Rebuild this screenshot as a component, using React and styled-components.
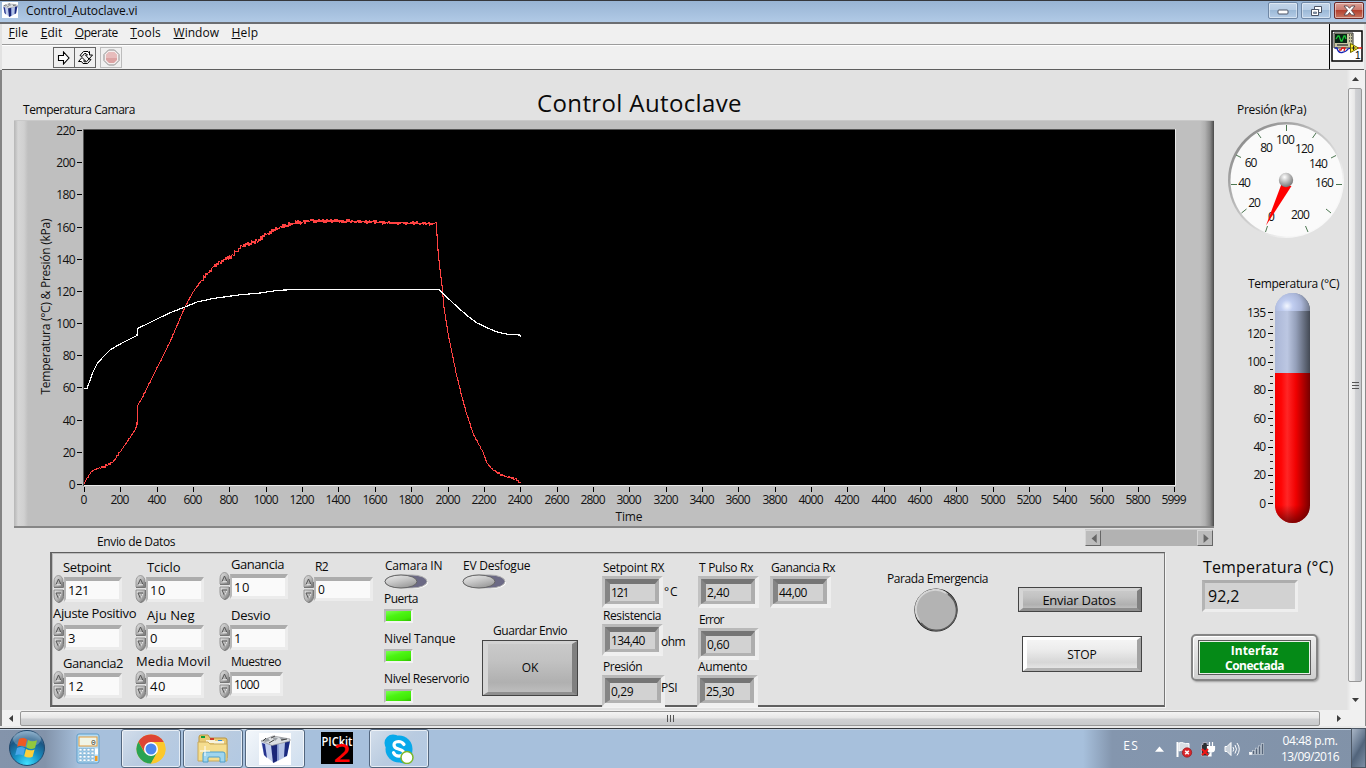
import React, { useLayoutEffect, useRef } from "react";
import styled, { createGlobalStyle, css } from "styled-components";

const FONT = '"Open Sans", "Noto Sans", sans-serif';

const GlobalStyle = createGlobalStyle`
  * { box-sizing: border-box; }
  html, body { margin: 0; padding: 0; overflow: hidden; }
  body { font-family: ${FONT}; font-size: 12px; color: #000; }
  svg { display: block; flex: none; }
`;

/* ---------- text ---------- */

const TextSpan = styled.span`
  display: block;
  flex: none;
  width: max-content;
  white-space: nowrap;
  font-size: ${(p) => p.$size || 12}px;
  line-height: ${(p) => p.$lh || 16}px;
  font-weight: ${(p) => p.$weight || 400};
  color: ${(p) => p.$color || "#0a0a0a"};
  margin: ${(p) => p.$m || "0"};
  &::first-letter { text-decoration: ${(p) => (p.$mnemonic ? "underline" : "none")}; }
`;

/* Tracks its letters so that the line has the given width. */
function Text({ w, children, ...rest }) {
  const ref = useRef(null);
  useLayoutEffect(() => {
    const el = ref.current;
    if (!w || !el) return;
    el.style.letterSpacing = "0px";
    const natural = el.getBoundingClientRect().width;
    const n = Math.max(1, String(children).length - 1);
    el.style.letterSpacing = `${(w + 1.5 - natural) / n}px`;
  }, [w, children]);
  return (
    <TextSpan ref={ref} {...rest}>
      {children}
    </TextSpan>
  );
}

/* ---------- window chrome ---------- */

const Screen = styled.div`
  width: 1366px;
  height: 768px;
  display: flex;
  flex-direction: column;
  background: #e2e2e2;
  overflow: hidden;
`;

const TitleBar = styled.header`
  height: 24px;
  flex: none;
  display: flex;
  align-items: flex-start;
  padding: 1px 0 0 2px;
  border-top: 1px solid #35373c;
  border-bottom: 2px solid #6c6e72;
  background: linear-gradient(#98b4d4, #b1cae6);
`;

const WindowButtons = styled.div`
  display: flex;
  gap: 3px;
  margin: 0 2px 0 auto;
`;

const WindowButton = styled.div`
  width: 30px;
  height: 17px;
  display: flex;
  align-items: center;
  justify-content: center;
  border: 1px solid ${(p) => (p.$close ? "#6d2a29" : "#6f87a5")};
  border-radius: 2px;
  box-shadow: inset 0 0 0 1px rgba(255, 255, 255, 0.45);
  background: ${(p) =>
    p.$close
      ? "linear-gradient(#dba197, #c9776c 48%, #b4412f 50%, #c87660)"
      : "linear-gradient(#c3d5e9, #b6cce4 48%, #9cb9d7 50%, #b5cde7)"};
`;

const Bars = styled.div`
  height: 46px;
  flex: none;
  display: flex;
  margin: 0 2px;
  background: #f0f0f0;
  border-bottom: 1px solid #5e5e5e;
`;

const BarStack = styled.div`
  flex: 1;
`;

const MenuBar = styled.nav`
  height: 21px;
  display: flex;
  gap: 12.5px;
  padding: 1px 0 0 6.5px;
  border-bottom: 1px solid #9c9c9c;
`;

const ToolBar = styled.div`
  height: 24px;
  display: flex;
  align-items: flex-start;
  padding: 1px 0 0 51px;
  border-top: 1px solid #fff;
`;

const ToolButton = styled.div`
  width: 22px;
  height: 21px;
  display: flex;
  align-items: center;
  justify-content: center;
  border: 1px solid ${(p) => (p.$off ? "#bcbcbc" : "#666")};
  margin-left: ${(p) => p.$ml || 0}px;
`;

const ViIconCell = styled.div`
  width: 35px;
  padding: 6px 0 0 1px;
  border-left: 1px solid #000;
`;

/* ---------- front panel ---------- */

const Body = styled.div`
  height: 640px;
  flex: none;
  display: flex;
  border-left: 2px solid #848484;
  border-right: 1px solid #8a8a8a;
`;

const FrontPanel = styled.main`
  width: 1345px;
  flex: none;
  display: flex;
  background: #e2e2e2;
`;

const LeftSide = styled.section`
  width: 1212px;
  flex: none;
`;

const RightSide = styled.aside`
  flex: 1;
`;

const Heading = styled.div`
  height: 50px;
  display: flex;
  align-items: flex-start;
`;

const GraphFrame = styled.div`
  width: 1200px;
  height: 408px;
  margin-left: 12px;
  padding: 2px 0 0 14px;
  border-top: 1px solid #c9c9c9;
  border-bottom: 2px solid #868686;
  background: linear-gradient(
    90deg,
    #b7b7b7 0, #c4c4c4 2px, #d6d6d6 4px, #d0d0d0 10px, #bfbfbf 14px,
    #bfbfbf 1186px, #b0b0b0 1191px, #8a8a8a 1196px, #5c5c5c 1199px, #484848 1200px
  );
`;

const UnderGraph = styled.div`
  height: 24px;
  display: flex;
  justify-content: space-between;
  padding: 0 1px 0 95px;
`;

const GraphScroll = styled.div`
  width: 128px;
  height: 17px;
  margin-top: 1px;
  display: flex;
  justify-content: space-between;
  background: #b2b2b2;
  border-top: 1px solid #c9c9c9;
`;

const GraphArrow = styled.div`
  width: 16px;
  height: 16px;
  display: flex;
  align-items: center;
  justify-content: center;
  background: #bcbcbc;
  border: 1px solid;
  border-color: #d5d5d5 #666 #666 #d5d5d5;
`;

const DataPanel = styled.section`
  width: 1115px;
  height: 155px;
  margin-left: 48px;
  display: flex;
  border: 2px solid;
  border-color: #5f5f5f #777 #5f5f5f #666;
  border-width: 1px 1px 2px 2px;
  padding-top: 1px;
  box-shadow: inset 1px 1px 0 #bdbdbd, 1px 1px 0 #f3f3f3;
`;

const Column = styled.div`
  width: ${(p) => p.$w}px;
  flex: none;
  padding-top: ${(p) => p.$pt || 0}px;
  margin-left: ${(p) => p.$ml || 0}px;
`;

const Row = styled.div`
  display: flex;
  margin: ${(p) => p.$m || "0"};
`;

const NumericBox = styled.div`
  width: ${(p) => p.$w}px;
  height: ${(p) => p.$h}px;
  margin: 2px 0 0 -1px;
  padding: 0 0 0 2px;
  display: flex;
  align-items: center;
  background: #fafafa;
  border: 3px solid;
  border-width: 4px 3px 3px 2px;
  border-color: #acacac #ececec #ececec #b8b8b8;
`;

const Readout = styled.div`
  width: ${(p) => p.$w}px;
  height: 32px;
  flex: none;
  border: 4px solid;
  border-width: 3px 4px 4px 3px;
  border-color: #b9b9b9 #eeeeee #f0f0f0 #c2c2c2;
`;

const ReadoutInner = styled.div`
  height: 100%;
  display: flex;
  align-items: center;
  padding-left: 1px;
  background: #d2d2d2;
  border: 4px solid;
  border-width: 5px 4px 3px 5px;
  border-color: #757575 #adadad #b2b2b2 #858585;
`;

const Led = styled.div`
  width: 29px;
  height: 14px;
  border: 2px solid;
  border-color: #b5b5b5 #f2f2f2 #f2f2f2 #b8b8b8;
  background: linear-gradient(165deg, #7dff55 0, #4cf413 40%, #41e806 75%, #2fc000 100%);
  margin-top: 2px;
`;

const buttonTone = {
  gray: css`
    background: linear-gradient(#c9c9c9, #c2c2c2 35%, #b0b0b0 80%, #bdbdbd);
    border-color: #d2d2d2 #808080 #8f8f8f #d6d6d6;
  `,
  white: css`
    background: linear-gradient(#f4f4f4, #ececec 35%, #d6d6d6 80%, #e4e4e4);
    border-color: #fff #a3a3a3 #b3b3b3 #fff;
  `,
};

const PushButton = styled.div`
  width: ${(p) => p.$w}px;
  height: ${(p) => p.$h}px;
  margin: ${(p) => p.$m || "0"};
  outline: 1px solid #444;
  outline-offset: -1px;
  padding: 1px;
  > div {
    height: 100%;
    display: flex;
    align-items: center;
    justify-content: center;
    border: ${(p) => p.$bevel || 4}px solid;
    border-top-width: 3px;
    border-bottom-width: 3px;
    ${(p) => buttonTone[p.$tone]}
  }
`;

const BigReadout = styled.div`
  width: 96px;
  height: 32px;
  margin: 3px 0 0 -12px;
  display: flex;
  align-items: center;
  padding-left: 3px;
  background: #d2d2d2;
  border: 3px solid;
  border-color: #adadad #eeeeee #eeeeee #b4b4b4;
`;

const StatusFrame = styled.div`
  width: 127px;
  height: 47px;
  margin: 22px 0 0 -23px;
  padding: 4px 5px;
  border: 2px solid #858585;
  border-radius: 5px;
  background: linear-gradient(#ededed, #d0d0d0);
  box-shadow: inset 1px 1px 0 #fff, 1px 1px 2px rgba(0, 0, 0, 0.3);
`;

const StatusLamp = styled.div`
  height: 35px;
  border: 1px solid #5d5d5d;
  box-shadow: inset 0 0 0 1px #e8f0e8;
  padding-top: 2px;
  display: flex;
  flex-direction: column;
  align-items: center;
  background: #058a17;
`;

/* ---------- window scroll bars ---------- */

const VScroll = styled.div`
  flex: 1;
  display: flex;
  flex-direction: column;
  align-items: center;
  padding-right: 2px;
  background: linear-gradient(90deg, #e3e3e3, #f1f1f1 4px);
`;

const VThumb = styled.div`
  width: 14px;
  height: 594px;
  margin: 6px 0 14px 0;
  display: flex;
  align-items: center;
  justify-content: center;
  border: 1px solid #979797;
  border-radius: 2px;
  background: linear-gradient(90deg, #f4f4f4, #e8e8e8 45%, #cfd0d3 55%, #c6c8cc);
`;

const HScroll = styled.div`
  height: 16px;
  flex: none;
  display: flex;
  align-items: center;
  border-left: 2px solid #848484;
  border-right: 1px solid #8a8a8a;
  background: #f0f0f0;
  padding-left: 5px;
`;

const HThumb = styled.div`
  width: 1300px;
  height: 15px;
  margin: 0 15px 0 6px;
  display: flex;
  align-items: center;
  justify-content: center;
  border: 1px solid #979797;
  border-radius: 2px;
  background: linear-gradient(#f4f4f4, #e6e6e6 45%, #d0d1d3 55%, #c8cacc);
`;

/* ---------- taskbar ---------- */

const Taskbar = styled.footer`
  height: 42px;
  flex: none;
  display: flex;
  align-items: flex-start;
  border-top: 2px solid #e9e9e9;
  box-shadow: inset 0 1px 0 #34393f, inset 0 2px 0 #c0d0e2;
  background: linear-gradient(
    90deg,
    #8494ab 0, #8293aa 45px, #a7c0dc 80px, #a7c0dc 1083px, #8496ae 1112px, #8192a8 100%
  );
`;

const TaskSlot = styled.div`
  width: ${(p) => p.$w}px;
  height: 40px;
  padding-top: ${(p) => p.$pt || 0}px;
  display: flex;
  justify-content: center;
`;

const TaskButton = styled.div`
  width: 60px;
  height: 39px;
  margin: 1px ${(p) => p.$mr ?? 2}px 0 0;
  display: flex;
  align-items: center;
  justify-content: center;
  border: 1px solid #53677f;
  border-radius: 3px;
  box-shadow: inset 0 0 0 1px rgba(255, 255, 255, 0.65);
  background: ${(p) =>
    p.$active
      ? "linear-gradient(135deg, #f3f7fb, #dce6f1 60%, #cfdff0)"
      : "linear-gradient(135deg, #d3deeb, #b9cbe0 50%, #b2c9e3)"};
`;

const Tray = styled.div`
  margin-left: auto;
  height: 40px;
  display: flex;
  align-items: flex-start;
`;

const TrayIcons = styled.div`
  display: flex;
  gap: 7px;
  margin: 13px 16px 0 12px;
`;

const Clock = styled.div`
  width: 58px;
  display: flex;
  flex-direction: column;
  align-items: center;
  padding-top: 5px;
  margin-right: 12px;
`;

const ShowDesktop = styled.div`
  width: 15px;
  height: 40px;
  border: 1px solid #4d5866;
  background: linear-gradient(120deg, #a9b6c6, #66788f 45%, #52647b 55%, #7d8fa5);
`;

/* ---------- icons ---------- */

const BoxIcon = ({ size }) => (
  <svg width={size} height={size} viewBox="0 0 32 32">
    <rect width="32" height="32" fill="#fff" />
    <path d="M2 9 13 12 15 30 5 22z" fill="#c3cfee" />
    <path d="M13 12 31 8 28 23 15 30z" fill="#b4c3e6" />
    <path d="M3 10 6 11 8 25 5 22z" fill="#26348f" />
    <path d="M12 12 18 11 18 28 14 30z" fill="#1b2678" />
    <path d="M26 9 31 8 28 23 25 24z" fill="#1b2a80" />
    <path d="M18 11 19.500 10.700 20 27 18 28z" fill="#7f92cc" />
    <path d="M2 8 14 3 31 6 31 8 13 12.500z" fill="#dcdfe2" stroke="#8a8d92" strokeWidth=".7" />
    <path d="M4 7 9 5 11 8 6 9zM13 4 19 5 16 8zM20 4 28 6 23 8z" fill="#9a9fa4" />
    <path d="M12 5l4-2M7 5 4 8M22 7l6-1M10 10l5-3" stroke="#444" strokeWidth="1" />
  </svg>
);

const MinIcon = () => (
  <svg width="13" height="8"><rect x="1" y="3" width="10" height="4" rx="1" fill="#fff" stroke="#4c5566" /></svg>
);
const RestoreIcon = () => (
  <svg width="13" height="12">
    <path d="M4.500 1.500h7v6h-7z" fill="#fff" stroke="#4c5566" /><path d="M7 4h2.500v1.500H7z" fill="#8fa6c2" />
    <path d="M1.500 4.500h7v6h-7z" fill="#fff" stroke="#4c5566" /><path d="M3.500 7h3v1.500h-3z" fill="#8fa6c2" stroke="#4c5566" strokeWidth=".6" />
  </svg>
);
const CloseIcon = () => (
  <svg width="13" height="11">
    <path d="M1 1h3.500l2 2.300L8.500 1H12L8.400 5.400 12 10H8.500l-2-2.500-2 2.500H1l3.600-4.600z" fill="#fff" stroke="#53444a" strokeWidth=".9" />
  </svg>
);
const RunIcon = () => (
  <svg width="14" height="14"><path d="M1.500 4.500h5v-3.500l5.500 6-5.500 6v-3.500h-5z" fill="#fff" stroke="#000" strokeWidth="1.100" /></svg>
);
const RunLoopIcon = () => (
  <svg width="17" height="15" fill="#fff" stroke="#000" strokeWidth="1">
    <path d="M3 5.500 6.500 1.500H11l1.500 2V1.500 5h3L12 9 8.500 5h2L9 3.500H7.500L5 6.500z" />
    <path d="M14 9.500 10.500 13.500H6l-1.500-2H1.500L5 7.500 8.500 11h-2l1 .8h2L12 9z" />
  </svg>
);
const AbortIcon = () => (
  <svg width="17" height="17">
    <path d="M5.500 1h6L16 5.500v6L11.500 16h-6L1 11.500v-6z" fill="#f5eeee" stroke="#8e8e8e" />
    <path d="M6 3h5l3 3v5l-3 3H6l-3-3V6z" fill="#dca3a3" /><path d="M6 3h5l3 3v3H3V6z" fill="#e7bcbc" />
  </svg>
);
const ViIcon = () => (
  <svg width="32" height="32">
    <rect x="1" y="1" width="30" height="30" fill="#fff" stroke="#000" strokeWidth="1.500" />
    <path d="M3 3h19v15H3z" fill="#c9c7a3" stroke="#333" />
    <path d="M4 4h12v9H4z" fill="#0a2216" />
    <path d="M5 9l2-3h1l2 5h1l2-5h1l1 3" fill="none" stroke="#19c436" strokeWidth="1.300" />
    <path d="M18 5h1M20 5h1M18 8h1M20 8h1M18 11h1M20 11h1M6 15h11" stroke="#444" strokeWidth="1.300" />
    <path d="M4 18h2q1 5 5 4.500t6-3.500l3-1" fill="none" stroke="#1524b5" strokeWidth="1.300" />
    <path d="M8 20h2l1-2h3l-1 3M24 18h7" fill="none" stroke="#e01414" strokeWidth="1.300" />
    <path d="M19.500 13.500l8 4.500-8 4.500z" fill="#ffef2a" stroke="#6b6500" /><path d="M20.500 18h4M22.500 16v4" stroke="#222" />
    <text x="24" y="29" fontSize="10" fontFamily="Liberation Sans">1</text>
  </svg>
);

const Triangle = ({ dir, size = 7, color = "#3c3c3c" }) => {
  const d = { up: "M0 6 3.500 2 7 6z", down: "M0 2 3.500 6 7 2z", left: "M6 0 2 3.500 6 7z", right: "M2 0 6 3.500 2 7z" }[dir];
  return <svg width={size} height={size} viewBox="0 0 7 7"><path d={d} fill={color} /></svg>;
};

const Grip = ({ vertical }) => (
  <svg width="9" height="9" shapeRendering="crispEdges">
    {[0, 3, 6].map((o) =>
      vertical
        ? <rect key={o} x="1" y={o + 1} width="7" height="1" fill="#555" />
        : <rect key={o} x={o + 1} y="1" width="1" height="7" fill="#555" />
    )}
  </svg>
);

const Spinner = () => (
  <svg width="12" height="28">
    <defs>
      <linearGradient id="spin" x1="0" x2="1" y1="0" y2="1">
        <stop offset="0" stopColor="#e2e2e2" /><stop offset=".55" stopColor="#b4b4b4" /><stop offset="1" stopColor="#6f6f6f" />
      </linearGradient>
    </defs>
    <path d="M1 12V7Q1 1 5.500 .5 10 1 10 7v5z" fill="url(#spin)" stroke="#8a8a8a" strokeWidth=".8" />
    <path d="M1 15h9v5q0 6-4.500 7.500Q1 26 1 20z" fill="url(#spin)" stroke="#808080" strokeWidth=".8" />
    <path d="M3 9.500 5.500 4 8 9.500" fill="none" stroke="#555" strokeWidth="1" />
    <path d="M5.500 23.500 3 18h5z" fill="none" stroke="#555" strokeWidth="1" />
    <path d="M3.500 9.800h4.500M8 18.500 5.700 23.500" stroke="#f8f8f8" strokeWidth=".9" />
    <path d="M1 12.500h9.500V7M5.500 27.500q5-1 5-6V15" fill="none" stroke="#6d6d6d" strokeWidth=".9" />
  </svg>
);

const Switch = () => (
  <svg width="46" height="16">
    <defs>
      <linearGradient id="knob" x1="0" x2=".6" y1="0" y2="1">
        <stop offset="0" stopColor="#eee" /><stop offset=".5" stopColor="#c9c9c9" /><stop offset="1" stopColor="#9b9b9b" />
      </linearGradient>
    </defs>
    <rect x="2" y="2" width="42" height="13" rx="15" ry="6.500" fill="#fff" />
    <rect x="1" y="1" width="42" height="13" rx="15" ry="6.500" fill="#6c6a85" stroke="#b0b0b0" />
    <ellipse cx="17" cy="7.500" rx="16" ry="6.500" fill="url(#knob)" stroke="#666" strokeWidth="1" />
  </svg>
);

const RoundButton = () => (
  <svg width="44" height="44">
    <circle cx="22" cy="22" r="21" fill="#b3b3b3" stroke="#151515" strokeWidth="1.200" />
    <path d="M5 32A19.500 19.500 0 0 1 32 5" fill="none" stroke="#d4d4d4" strokeWidth="2" />
    <path d="M7 35A20 20 0 1 0 34 6" fill="none" stroke="#5a5a5a" strokeWidth="1.600" />
  </svg>
);

/* ---------- graph ---------- */

const RED = [
  [84, 484], [87, 478], [91, 472], [94, 470], [100, 468], [108, 465], [113, 462], [116, 458], [120, 452], [127, 442], [131, 436],
  [135, 430], [137, 425], [137.500, 406], [142, 398], [147, 388], [160, 362], [170, 342], [185, 307], [193, 292], [202, 280],
  [213, 267], [220, 262], [233, 255], [242, 246], [257, 241], [267, 234], [280, 227], [293, 223.500], [310, 221], [350, 221.300],
  [387, 222.700], [433, 223.700], [436, 222.500], [437, 235], [438, 250], [439.500, 265], [442, 285], [444, 308], [448, 333],
  [452, 353], [457, 377], [462, 397], [467, 415], [473, 433], [478, 443], [483, 452], [487, 463], [493, 470], [500, 474],
  [507, 477], [515, 479], [521, 483],
];
const WHITE = [
  [84, 388.500], [87, 388.500], [89, 383], [93, 372], [97, 364], [102, 358], [110, 350], [122, 343], [137, 335.500], [137.500, 328.500],
  [147, 324], [160, 317.500], [172, 312], [185, 307], [197, 302], [213, 298.500], [240, 294.800], [260, 293], [277, 290.500],
  [293, 289.500], [439, 289.500], [453, 303], [467, 315.500], [477, 323], [490, 329], [497, 332], [509, 334.500], [520, 335], [521, 337],
];

const hash = (k) => {
  const s = Math.sin(k * 12.9898) * 43758.5453;
  return s - Math.floor(s);
};

/* Sensor ripple on the pressure trace, one sample per pixel. */
const ripple = (points) => {
  const out = [];
  let k = 0;
  points.forEach(([x, y], i) => {
    const next = points[i + 1];
    out.push([x, y]);
    if (!next || next[0] - x < 4) return;
    const amp = x >= 200 && x < 350 ? 2.3 : x >= 350 && x < 436 ? 1.8 : x < 120 || x > 487 ? 1.3 : 0.5;
    for (let px = x + 1; px < next[0]; px += 1) {
      const t = (px - x) / (next[0] - x);
      k += 1;
      const noise = hash(k) * (k % 2 ? 1 : -1);
      out.push([px, y + (next[1] - y) * t + noise * amp]);
    }
  });
  return out;
};
const toPath = (pts) => pts.map(([x, y], i) => `${i ? "L" : "M"}${x} ${y.toFixed(1)}`).join("");

const ChartText = ({ x, y, w, anchor = "middle", children, ...rest }) => (
  <text x={x} y={y} textAnchor={anchor} textLength={w} fontSize="12" fontFamily={FONT} fill="#111" {...rest}>
    {children}
  </text>
);

function Graph() {
  const yTicks = Array.from({ length: 12 }, (_, i) => i * 20);
  const xTicks = [...Array.from({ length: 30 }, (_, i) => i * 200), 5999];
  return (
    <svg width="1172" height="402" viewBox="28 123 1172 402" overflow="visible">
      <rect x="84" y="129" width="1091" height="357" fill="#000" />
      <path d="M83.500 486V129.500H1175" fill="none" stroke="#555" />
      <path d="M84 485.500H1175.500V129" fill="none" stroke="#e9e9e9" />
      {yTicks.map((v) => {
        const y = Math.round(484 - v * 1.609);
        return (
          <g key={v}>
            <rect x="77" y={y} width="5" height="1" fill="#000" />
            <ChartText x="75.500" y={y + 5} anchor="end" w={String(v).length * 6.400}>{v}</ChartText>
          </g>
        );
      })}
      {xTicks.map((v) => {
        const x = Math.round(84 + v * 0.18175);
        return (
          <g key={v}>
            <rect x={x} y="487" width="1" height="5" fill="#000" />
            <ChartText x={x} y="504" w={String(v).length * 6.300}>{v}</ChartText>
          </g>
        );
      })}
      <ChartText x="629" y="521" w="27">Time</ChartText>
      <ChartText x="0" y="0" w="176" transform="translate(50 306.500) rotate(-90)">Temperatura (°C) &amp; Presión (kPa)</ChartText>
      <path d={toPath(ripple(RED))} fill="none" stroke="#ff4242" strokeWidth="1.100" shapeRendering="crispEdges" />
      <path d={toPath(WHITE)} fill="none" stroke="#fff" strokeWidth="1.200" shapeRendering="crispEdges" />
    </svg>
  );
}

/* ---------- gauge and thermometer ---------- */

const GAUGE_LABELS = [
  [0, 1271.5, 217], [20, 1254.5, 203], [40, 1244.5, 183], [60, 1251, 163], [80, 1266.5, 148], [100, 1285.5, 140],
  [120, 1304.5, 149], [140, 1318.500, 164], [160, 1324.500, 183], [200, 1300.500, 215],
];

function Gauge() {
  return (
    <svg width="120" height="120" viewBox="1226 120 120 120">
      <defs>
        <linearGradient id="rim" x1="0" x2="1" y1="0" y2="1">
          <stop offset="0" stopColor="#777" /><stop offset=".45" stopColor="#c4c4c4" /><stop offset=".75" stopColor="#f4f4f4" /><stop offset="1" stopColor="#fff" />
        </linearGradient>
        <radialGradient id="hub" cx=".4" cy=".3" r=".7">
          <stop offset="0" stopColor="#fff" /><stop offset=".35" stopColor="#cfcfcf" /><stop offset="1" stopColor="#777" />
        </radialGradient>
      </defs>
      <circle cx="1286" cy="180" r="58" fill="url(#rim)" />
      <circle cx="1286.500" cy="180.500" r="56" fill="#fafafa" />
      <path
        d="M1286.500 125v6M1231 184.500h6M1336 184.500h6M1267.500 226l-2 6M1241.500 213l5-4M1236 155l5 2.500M1257.500 133l3.500 5M1316 133l-3.500 5M1336 155.500l-5 2.500M1331 213l-5-4M1305.500 226l2.500 6"
        stroke="#4b7650" strokeWidth="1" fill="none"
      />
      {GAUGE_LABELS.map(([v, x, y]) => (
        <ChartText key={v} x={x} y={y + 4} w={String(v).length * 6.300}>{v}</ChartText>
      ))}
      <path d="M1281.500 184 1291.500 186 1266 225.500z" fill="#f00" />
      <circle cx="1286" cy="180" r="7.200" fill="url(#hub)" />
    </svg>
  );
}

const THERMO_LABELS = [0, 20, 40, 60, 80, 100, 120, 135];

function Thermometer() {
  const yOf = (v) => 503.500 - v * 1.417;
  const minors = Array.from({ length: 27 }, (_, i) => i * 5).filter((v) => v % 20);
  return (
    <svg width="70" height="232" viewBox="1242 292 70 232">
      <defs>
        <linearGradient id="glass" x1="0" x2="1" y1="0" y2="0">
          <stop offset="0" stopColor="#aab6d6" /><stop offset=".35" stopColor="#bcc7e2" /><stop offset=".6" stopColor="#949fb9" /><stop offset="1" stopColor="#434954" />
        </linearGradient>
        <linearGradient id="fluid" x1="0" x2="1" y1="0" y2="0">
          <stop offset="0" stopColor="#f40000" /><stop offset=".18" stopColor="#ff0606" /><stop offset=".35" stopColor="#ff2626" /><stop offset=".6" stopColor="#f00000" /><stop offset="1" stopColor="#750000" />
        </linearGradient>
        <radialGradient id="cap" gradientUnits="userSpaceOnUse" cx="1287" cy="306" r="24">
          <stop offset="0" stopColor="#f3f7ff" /><stop offset=".25" stopColor="#c0cdf0" /><stop offset=".6" stopColor="#aab6d8" /><stop offset="1" stopColor="#6a7283" />
        </radialGradient>
        <linearGradient id="base" x1="0" x2="0" y1="0" y2="1">
          <stop offset="0" stopColor="#600" stopOpacity="0" /><stop offset="1" stopColor="#500" stopOpacity=".75" />
        </linearGradient>
        <clipPath id="tube"><rect x="1275" y="293" width="35" height="230" rx="17.500" /></clipPath>
      </defs>
      <g clipPath="url(#tube)">
        <rect x="1275" y="293" width="35" height="81" fill="url(#glass)" />
        <rect x="1275" y="293" width="35" height="18" fill="url(#cap)" />
        <rect x="1275" y="373" width="35" height="150" fill="url(#fluid)" />
        <rect x="1275" y="505" width="35" height="18" fill="url(#base)" />
      </g>
      {THERMO_LABELS.map((v) => (
        <g key={v}>
          <rect x="1268" y={Math.round(yOf(v) - 0.2)} width="5" height="1" fill="#000" />
          <ChartText x="1266" y={Math.round(yOf(v) + 0.3) + 4} anchor="end" w={String(v).length * 6.300}>{v}</ChartText>
        </g>
      ))}
      {minors.map((v) => (
        <rect key={v} x="1270" y={Math.round(yOf(v) - 0.2)} width="3" height="1" fill="#222" />
      ))}
    </svg>
  );
}

/* ---------- controls ---------- */

function Field({ label, lw, indent = 10, value, vw, gap = 0, lgap = 0, w = 58, h = 25, size = 13 }) {
  return (
    <Column>
      <Text w={lw} $size={size} $m={`${gap}px 0 ${lgap}px ${indent}px`}>{label}</Text>
      <Row $m="0 0 -1px">
        <Spinner />
        <NumericBox $w={w} $h={h}>
          <Text w={vw} $size={size}>{value}</Text>
        </NumericBox>
      </Row>
    </Column>
  );
}

function Indicator({ label, lw, indent = 1, value, vw, unit, uw, um, w = 61, gap = 0 }) {
  return (
    <div>
      <Text w={lw} $m={`${gap}px 0 0 ${indent}px`}>{label}</Text>
      <Row>
        <Readout $w={w}>
          <ReadoutInner><Text w={vw}>{value}</Text></ReadoutInner>
        </Readout>
        {unit && <Text w={uw} $m={um}>{unit}</Text>}
      </Row>
    </div>
  );
}

const MENUS = [["File", 18], ["Edit", 20], ["Operate", 42], ["Tools", 29], ["Window", 44], ["Help", 25]];

/* ---------- taskbar icons ---------- */

const StartOrb = () => (
  <svg width="38" height="38" viewBox="0 0 38 38">
    <defs>
      <radialGradient id="orb" cx=".5" cy=".95" r=".95">
        <stop offset="0" stopColor="#3fe1ff" /><stop offset=".4" stopColor="#1690c4" /><stop offset=".75" stopColor="#1c5683" /><stop offset="1" stopColor="#6e9cc0" />
      </radialGradient>
    </defs>
    <circle cx="19" cy="19" r="17.500" fill="url(#orb)" stroke="#20496e" />
    <ellipse cx="19" cy="10" rx="14" ry="8" fill="#fff" opacity=".25" />
    <path d="M11 10q4-2 8 .4l-1.700 7.600q-4-2.200-8.200-.2z" fill="#ee5a24" />
    <path d="M20 11q4 2.400 9 .2l-2 7.800q-4.500 2-8.600-.4z" fill="#93c83e" />
    <path d="M9 19q4-2 8 .3l-1.800 7.300q-4-2.200-8-.3z" fill="#49a6e9" />
    <path d="M18 20q4 2.400 8.600.4l-2 7.300q-4.200 2-8.400-.4z" fill="#fccf3a" />
  </svg>
);
const CalcIcon = () => (
  <svg width="24" height="31">
    <rect x="1" y="1" width="22" height="29" rx="2" fill="#b7dcf3" stroke="#5c9dca" />
    <rect x="3" y="4" width="18" height="9" fill="#f1f5e6" stroke="#e29b3f" />
    <text x="15" y="12" fontSize="8" fontFamily="Liberation Mono" fill="#333">0</text>
    {[0, 1, 2, 3].map((r) => [0, 1, 2, 3].map((c) => (
      <rect key={`${r}${c}`} x={3 + c * 4} y={15.500 + r * 3.500} width="3" height="2.500" fill="#fff" stroke="#5f9cc6" strokeWidth=".5" />
    )))}
    <rect x="19" y="15.500" width="3" height="6" fill="#fff" /><rect x="19" y="23" width="2.500" height="5" fill="#f39a1e" />
  </svg>
);
const ChromeIcon = () => (
  <svg width="30" height="30" viewBox="0 0 30 30">
    <circle cx="15" cy="15" r="14.500" fill="#fbc82c" />
    <path d="M15 15 8.500 18.500 2.440 7.750A14.500 14.500 0 0 0 15 29.500l6.200-11z" fill="#29a352" />
    <path d="M15 8h12.700A14.500 14.500 0 0 0 2.440 7.750L8.900 18.500z" fill="#de4534" />
    <path d="M15 8h12.700A14.500 14.500 0 0 1 15 29.500l6.100-11z" fill="#fbc82c" />
    <circle cx="15" cy="15" r="7" fill="#fff" /><circle cx="15" cy="15" r="5.500" fill="#4a87ee" />
  </svg>
);
const FolderIcon = () => (
  <svg width="34" height="31">
    <path d="M3 4q0-2 2-2h7l2 3h15q2 0 2 2v18H3z" fill="#e9ca74" stroke="#b99542" />
    <rect x="5" y="3" width="4" height="2" fill="#0a9e3b" /><rect x="14" y="5" width="4" height="2" fill="#d13d29" /><rect x="22" y="7" width="4" height="2" fill="#2d8bd8" />
    <path d="M10 7h9v3h-9zM18 8h10v3H18z" fill="#f8f3dc" />
    <path d="M2 9h10l2 2h17v17H2z" fill="#f5dd8e" stroke="#c8a95a" />
    <path d="M7 29v-8q0-2 2-2h18q2 0 2 2v8h-5v-4q0-1-1-1H13q-1 0-1 1v4z" fill="#9fd5ee" stroke="#4f9fca" />
    <path d="M9 13v10M4 18h10" stroke="#fff" strokeWidth="1" />
  </svg>
);
const PickitIcon = () => (
  <svg width="32" height="32" overflow="visible">
    <rect width="32" height="32" fill="#000" />
    <text x="0.500" y="14" fontSize="13" fontFamily="Open Sans" fontWeight="600" fill="#fff" textLength="31" lengthAdjust="spacingAndGlyphs">PICkit</text>
    <text x="12.500" y="30" fontSize="26" fontFamily="Open Sans" fontWeight="600" fill="#f00" textLength="17" lengthAdjust="spacingAndGlyphs">2</text>
  </svg>
);
const SkypeIcon = () => (
  <svg width="30" height="30">
    <circle cx="9" cy="9" r="8.500" fill="#08a9ea" /><circle cx="20" cy="21" r="8.500" fill="#08a9ea" /><circle cx="15" cy="15" r="13.500" fill="#08a9ea" />
    <path d="M20 10.500Q18 7.500 14.500 7.500 10 7.800 10 11c0 3 2.500 3.500 5 4.200s5 1.600 4.800 4Q19.500 22 15 22.200q-4 0-5.500-3.500" fill="none" stroke="#fff" strokeWidth="3.200" strokeLinecap="round" />
    <circle cx="23" cy="23.500" r="6" fill="#fff" stroke="#7db728" strokeWidth="1.500" />
  </svg>
);
const FlagIcon = () => (
  <svg width="17" height="17">
    <path d="M1.500 1v15" stroke="#fff" strokeWidth="2" /><path d="M3 2q3-1 4.500 0t5.500 .5v7.500q-3 1-5.500-.3T3 10z" fill="#d9dee4" stroke="#fff" />
    <circle cx="11" cy="11.500" r="4.700" fill="#d8262b" stroke="#96181b" strokeWidth=".7" /><path d="M9.200 9.700l3.600 3.600m0-3.600l-3.600 3.600" stroke="#fff" strokeWidth="1.600" />
  </svg>
);
const PowerIcon = () => (
  <svg width="17" height="17">
    <path d="M1.500 3.500H3v-2h4v2h2v11.500H1.500z" fill="#2b2f33" stroke="#aab" />
    <path d="M9.500 1v4M12.500 1v4M7.500 5.500h7v2.500q0 3-3.500 3T7.500 8zM11 11v4H8" fill="#fff" stroke="#fff" strokeWidth="1.200" />
    <path d="M2 8l6 6m0-6l-6 6" stroke="#f01616" strokeWidth="2.200" />
  </svg>
);
const SpeakerIcon = () => (
  <svg width="17" height="17">
    <path d="M1 5.500h2l4-4v13l-4-4H1z" fill="#c9d1da" stroke="#fff" />
    <path d="M9 6q1.500 2.200 0 4.500M11 4q3 4.200 0 8.500M13 2q4.500 6.200 0 12.500" fill="none" stroke="#fff" strokeWidth="1" />
  </svg>
);
const SignalIcon = () => (
  <svg width="17" height="17">
    {[0, 1, 2, 3, 4].map((i) => (
      <rect key={i} x={1.500 + i * 3} y={11.500 - i * 2.200} width="2.200" height={2 + i * 2.200} fill={i < 1 ? "#fff" : "#56657a"} stroke={i < 1 ? "#fff" : "#cfd7e0"} strokeWidth=".6" />
    ))}
  </svg>
);

/* ---------- page ---------- */

export default function App() {
  return (
    <Screen>
      <GlobalStyle />
      <TitleBar>
        <BoxIcon size={16} />
        <Text w={110} $m="1px 0 0 8px">Control_Autoclave.vi</Text>
        <WindowButtons>
          <WindowButton><MinIcon /></WindowButton>
          <WindowButton><RestoreIcon /></WindowButton>
          <WindowButton $close><CloseIcon /></WindowButton>
        </WindowButtons>
      </TitleBar>

      <Bars>
        <BarStack>
          <MenuBar>
            {MENUS.map(([name, w]) => <Text key={name} w={w} $mnemonic>{name}</Text>)}
          </MenuBar>
          <ToolBar>
            <ToolButton><RunIcon /></ToolButton>
            <ToolButton $ml={-1}><RunLoopIcon /></ToolButton>
            <ToolButton $ml={4} $off><AbortIcon /></ToolButton>
          </ToolBar>
        </BarStack>
        <ViIconCell><ViIcon /></ViIconCell>
      </Bars>

      <Body>
        <FrontPanel>
          <LeftSide>
            <Heading>
              <Text w={111} $m="32px 0 0 21px">Temperatura Camara</Text>
              <Text w={203} $size={24} $lh={30} $m="18px 0 0 402px">Control Autoclave</Text>
            </Heading>
            <GraphFrame><Graph /></GraphFrame>
            <UnderGraph>
              <Text w={77} $m="6px 0 0">Envio de Datos</Text>
              <GraphScroll>
                <GraphArrow><Triangle dir="left" size={9} color="#666" /></GraphArrow>
                <GraphArrow><Triangle dir="right" size={9} color="#666" /></GraphArrow>
              </GraphScroll>
            </UnderGraph>
            <DataPanel>
              <Column $w={82} $ml={1}>
                <Field label="Setpoint" lw={47} value="121" vw={20} gap={5} />
                <Field label="Ajuste Positivo" lw={82} indent={0} value="3" gap={3} lgap={2} />
                <Field label="Ganancia2" lw={59} value="12" vw={14} gap={5} />
              </Column>
              <Column $w={84}>
                <Field label="Tciclo" lw={32} indent={12} value="10" vw={14} gap={5} />
                <Field label="Aju Neg" lw={46} indent={12} value="0" gap={5} />
                <Field label="Media Movil" lw={73} indent={1} value="40" vw={14} gap={3} lgap={2} />
              </Column>
              <Column $w={84}>
                <Field label="Ganancia" lw={52} indent={12} value="10" vw={14} gap={2} />
                <Field label="Desvio" lw={38} indent={12} value="1" gap={8} />
                <Field label="Muestreo" lw={49} indent={12} value="1000" vw={24} gap={4} w={53} h={24} size={12} />
              </Column>
              <Column $w={81}>
                <Field label="R2" lw={12} indent={12} value="0" gap={5} w={59} h={24} size={12} />
              </Column>
              <Column $w={78} $pt={4}>
                <Text w={56} $m="0 0 0 1px">Camara IN</Text>
                <Switch />
                <Text w={33} $m="1px 0 0">Puerta</Text>
                <Led />
                <Text w={70} $m="8px 0 0">Nivel Tanque</Text>
                <Led />
                <Text w={84} $m="8px 0 0">Nivel Reservorio</Text>
                <Led />
              </Column>
              <Column $w={140} $pt={4}>
                <Text w={66} $m="0 0 0 1px">EV Desfogue</Text>
                <Switch />
                <Text w={73} $m="33px 0 0 31px">Guardar Envio</Text>
                <PushButton $w={96} $h={56} $m="1px 0 0 20px" $tone="gray" $bevel={5}><div><Text w={15}>OK</Text></div></PushButton>
              </Column>
              <Column $w={96} $pt={6}>
                <Indicator label="Setpoint RX" lw={60} value="121" vw={17} unit="°C" uw={12} um="8px 0 0 1px" />
                <Indicator label="Resistencia" lw={57} value="134,40" vw={33} unit="ohm" uw={23} um="10px 0 0 -2px" />
                <Indicator label="Presión" lw={38} value="0,29" vw={21} unit="PSI" uw={15} um="5px 0 0 -4px" w={63} gap={3} />
              </Column>
              <Column $w={72} $pt={6}>
                <Indicator label="T Pulso Rx" lw={53} value="2,40" vw={21} />
                <Indicator label="Error" lw={24} value="0,60" vw={21} gap={4} />
                <Row $m="-1px 0 0 -1px">
                  <Indicator label="Aumento" lw={48} value="25,30" vw={27} />
                </Row>
              </Column>
              <Column $w={116} $pt={6}>
                <Indicator label="Ganancia Rx" lw={63} value="44,00" vw={27} />
              </Column>
              <Column $w={132} $pt={17}>
                <Text w={100} $m="0 0 1px 1px">Parada Emergencia</Text>
                <Row $m="0 0 0 28px"><RoundButton /></Row>
              </Column>
              <Column $w={124} $pt={33}>
                <PushButton $w={124} $h={25} $tone="gray"><div><Text w={72} $size={13} $m="1px 2px 0 0">Enviar Datos</Text></div></PushButton>
                <PushButton $w={120} $h={36} $m="24px 0 0 4px" $tone="white"><div><Text w={28} $m="1px 0 0">STOP</Text></div></PushButton>
              </Column>
            </DataPanel>
          </LeftSide>

          <RightSide>
            <Text w={68} $m="32px 0 2px 23px">Presión (kPa)</Text>
            <Row $m="0 0 0 12px"><Gauge /></Row>
            <Text w={90} $m="36px 0 0 34px">Temperatura (°C)</Text>
            <Row $m="0 0 33px 28px"><Thermometer /></Row>
            <div>
              <Text w={129} $size={16} $lh={20} $m="0 0 0 -11px">Temperatura (°C)</Text>
              <BigReadout><Text w={30} $size={16} $lh={20}>92,2</Text></BigReadout>
              <StatusFrame>
                <StatusLamp>
                  <Text w={46} $lh={15} $weight={700} $color="#fff">Interfaz</Text>
                  <Text w={58} $lh={15} $weight={700} $color="#fff">Conectada</Text>
                </StatusLamp>
              </StatusFrame>
            </div>
          </RightSide>
        </FrontPanel>
        <VScroll>
          <Row $m="5px 0 0"><Triangle dir="up" /></Row>
          <VThumb><Grip vertical /></VThumb>
          <Triangle dir="down" />
        </VScroll>
      </Body>

      <HScroll>
        <Triangle dir="left" />
        <HThumb><Grip /></HThumb>
        <Triangle dir="right" />
      </HScroll>

      <Taskbar>
        <TaskSlot $w={54} $pt={1}><StartOrb /></TaskSlot>
        <TaskSlot $w={67} $pt={5}><Row $m="0 0 0 1px"><CalcIcon /></Row></TaskSlot>
        <TaskButton><ChromeIcon /></TaskButton>
        <TaskButton><FolderIcon /></TaskButton>
        <TaskButton $active $mr={0}><BoxIcon size={32} /></TaskButton>
        <TaskSlot $w={64} $pt={4}><PickitIcon /></TaskSlot>
        <TaskButton $mr={0}><SkypeIcon /></TaskButton>
        <Tray>
          <Text w={13} $color="#fff" $m="10px 0 0">ES</Text>
          <Row $m="16px 0 0 16px"><Triangle dir="up" size={9} color="#fff" /></Row>
          <TrayIcons><FlagIcon /><PowerIcon /><SpeakerIcon /><SignalIcon /></TrayIcons>
          <Clock>
            <Text w={54} $color="#fff">04:48 p.m.</Text>
            <Text w={57} $color="#fff">13/09/2016</Text>
          </Clock>
          <ShowDesktop />
        </Tray>
      </Taskbar>
    </Screen>
  );
}
